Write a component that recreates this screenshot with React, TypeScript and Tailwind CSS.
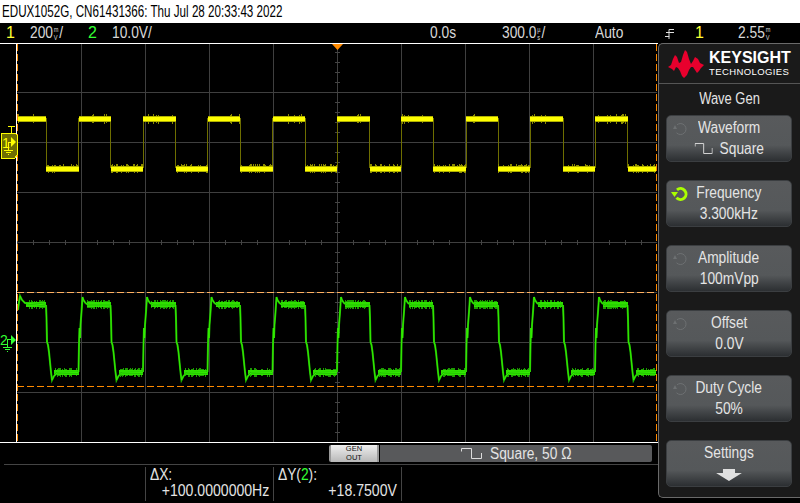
import React from "react";

const PLOT_L = 17;
const PLOT_R = 656;

// edges read off the trace, first one is a falling edge
const FALL = [46, 110.5, 175.5, 240, 305, 369.5, 433, 498, 563, 627.5];
const RISE = [78.5, 143, 207.5, 272.5, 337, 401, 466, 530, 595];
const VLINES = [81, 145, 209, 273, 337, 401, 465, 529, 593];
const HLINES = [92, 142, 192, 242, 292, 342, 392];

// the scope's font is narrower than anything installed
const NARROW = "inline-block origin-left scale-x-[0.86] whitespace-nowrap";
const NARROW_MID = "inline-block origin-center scale-x-[0.86] whitespace-nowrap";

let seed = 7;
const rnd = () => {
  seed = (seed * 16807) % 2147483647;
  return seed / 2147483647;
};

function spans() {
  const out: { a: number; b: number; high: boolean }[] = [];
  let x = PLOT_L + 1;
  FALL.forEach((f, i) => {
    out.push({ a: x, b: f, high: true });
    const r = RISE[i] ?? PLOT_R;
    out.push({ a: f, b: r, high: false });
    x = r;
  });
  return out;
}

function noise(a: number, b: number, y1: number, y2: number, chance: number) {
  let d = "";
  for (let x = Math.ceil(a); x < b; x += 1) {
    if (rnd() > chance) continue;
    const up = Math.floor(rnd() * 2);
    const dn = Math.floor(rnd() * 2);
    d += `M${x + 0.5} ${y1 - up}V${y2 + dn}`;
  }
  return d;
}

const yellowNoise = spans()
  .map((s) =>
    s.high ? noise(s.a, s.b, 115, 123, 0.1) : noise(s.a, s.b, 165, 172, 0.5)
  )
  .join("");

const yellowEdges = [...FALL, ...RISE]
  .map((x) => `M${Math.floor(x) + 0.5} 118V168`)
  .join("");

// one rising and one falling stretch of channel 2
function greenRise(x: number, end: number) {
  return `M${x} 372L${x + 0.5} 345L${x + 1} 328L${x + 1.5} 338L${x + 2} 325L${x + 3} 312L${x + 4} 297L${x + 5} 300L${x + 7} 303L${x + 10} 305L${end} 305`;
}
function greenFall(x: number, end: number) {
  return `M${x} 305L${x + 0.5} 318L${x + 1} 342L${x + 2} 345L${x + 3} 352L${x + 4} 362L${x + 5} 372L${x + 6} 380L${x + 8} 376L${x + 11} 373L${end} 372.5`;
}
const greenPath = [
  `M18 310L19 302L20 296L22 300L25 303L${FALL[0]} 305`,
  ...FALL.map((f, i) => greenFall(f, RISE[i] ?? PLOT_R)),
  ...RISE.map((r, i) => greenRise(r, FALL[i + 1])),
].join("");

const greenNoise = spans()
  .map((s) =>
    s.high
      ? noise(s.a + 8, s.b - 1, 301, 308, 0.7)
      : noise(s.a + 9, s.b - 1, 369, 376, 0.7)
  )
  .join("");

function Ticks() {
  const v: number[] = [];
  for (let y = 52; y < 442; y += 10) v.push(y);
  const h: number[] = [];
  for (let x = 17; x < 656; x += 16) h.push(x);
  return (
    <g stroke="#444" strokeWidth="1">
      {v.map((y) => (
        <path key={y} d={`M335 ${y + 0.5}H340`} />
      ))}
      {h.map((x) => (
        <path key={x} d={`M${x + 0.5} 240V245`} />
      ))}
    </g>
  );
}

function Plot() {
  return (
    <svg
      width="658"
      height="398"
      viewBox="0 44 658 398"
      className="block"
      shapeRendering="crispEdges"
    >
      <g stroke="#3f3f3f" strokeWidth="1">
        {VLINES.map((x) => (
          <path key={x} d={`M${x + 0.5} 44V442`} />
        ))}
        {HLINES.map((y) => (
          <path key={y} d={`M17 ${y + 0.5}H657`} />
        ))}
      </g>
      <Ticks />

      <path d={yellowEdges} stroke="#6e6e00" strokeWidth="1" />
      <path d={yellowNoise} stroke="#8a8a00" strokeWidth="1" />
      {spans().map((s) => (
        <g key={s.a}>
          <rect
            x={s.a}
            y={s.high ? 116 : 166}
            width={s.b - s.a}
            height="6"
            fill="#b0b000"
          />
          <rect
            x={s.a}
            y={s.high ? 117 : 167}
            width={s.b - s.a}
            height="4"
            fill="#ffff00"
          />
        </g>
      ))}

      <path d={greenNoise} stroke="#1c9c00" strokeWidth="1" />
      {spans().map((s) => (
        <rect
          key={s.a}
          x={s.a + 8}
          y={s.high ? 302 : 370}
          width={s.b - s.a - 8}
          height="5"
          fill="#2ee000"
        />
      ))}
      <g shapeRendering="auto">
        <path d={greenPath} stroke="#1fb400" strokeWidth="2" fill="none" />
        <path d={greenPath} stroke="#33ee00" strokeWidth="1" fill="none" />
      </g>

      <path d="M17 292.5H656" stroke="#ffb060" strokeDasharray="7 3" />
      <path d="M17 386.5H656" stroke="#ff8a00" strokeDasharray="7 3" />
      <path d="M16.5 44V442" stroke="#ffffff" />
      <path d="M17.5 44V442" stroke="#ff8a00" strokeDasharray="7 3" />
      <path d="M656.5 44V442" stroke="#ff8a00" strokeDasharray="7 3" />

      <path d="M332 44H343L337.5 50Z" fill="#ff8a00" shapeRendering="auto" />

      <path d="M1 133H15L17 135V155L15 158H1Z" fill="#6e6e00" stroke="#ffff00" />
      <path d="M8 126.5H15M11.5 127V133" stroke="#ffff00" />
      <text x="2" y="148" fontSize="14" fill="#ffff00" shapeRendering="auto">
        1
      </text>
      <path d="M8 150V142H12" stroke="#ffff00" fill="none" />
      <path d="M11 137L16 142L11 147Z" fill="#ffff00" shapeRendering="auto" />
      <path d="M4 150.5H13M6 152.5H11M8 154.5H9" stroke="#ffff00" />

      <text x="0" y="345" fontSize="14" fill="#33ff33" shapeRendering="auto">
        2
      </text>
      <path d="M7.5 348V339.5H11" stroke="#33ff33" fill="none" />
      <path d="M11 335L16 340L11 345Z" fill="#33ff33" shapeRendering="auto" />
      <path d="M3 347.5H12M5 349.5H10M7 351.5H8" stroke="#33ff33" />
    </svg>
  );
}

function Unit({ top, bottom }: { top: string; bottom: string }) {
  return (
    <span className="mx-px inline-flex flex-col align-middle text-[6.5px] leading-[7.5px]">
      <span>{top}</span>
      <span>{bottom}</span>
    </span>
  );
}

function StatusBar() {
  return (
    <div className="flex h-[20px] items-center bg-black text-[16px] leading-none text-[#d8d8d8]">
      <span className="w-[30px] pl-[6px] text-[#ffff33]">1</span>
      <span className="w-[58px]">
        <span className={NARROW}>
          200
          <Unit top="m" bottom="V" />/
        </span>
      </span>
      <span className="w-[24px] text-[#33ff33]">2</span>
      <span className="w-[318px]">
        <span className={NARROW}>10.0V/</span>
      </span>
      <span className="w-[72px]">
        <span className={NARROW}>0.0s</span>
      </span>
      <span className="w-[93px]">
        <span className={NARROW}>
          300.0
          <Unit top="µ" bottom="s" />/
        </span>
      </span>
      <span className="w-[70px]">
        <span className={NARROW}>Auto</span>
      </span>
      <span className="w-[30px]">
        <svg width="10" height="12" viewBox="0 0 10 12">
          <path d="M0 9.5H4V2.5H9M1 5.5H9M4 9V12" stroke="#e0e0e0" fill="none" />
        </svg>
      </span>
      <span className="w-[43px] text-[#ffff33]">1</span>
      <span className={NARROW}>
        2.55
        <Unit top="m" bottom="V" />
      </span>
    </div>
  );
}

function SquareGlyph() {
  return (
    <svg width="21" height="11" viewBox="0 0 21 11" className="inline-block">
      <path d="M.5 3.5V.5H10.5V10.5H20.5V5" stroke="#dcdcdc" fill="none" />
    </svg>
  );
}

function Knob({ active }: { active?: boolean }) {
  const color = active ? "#aaff00" : "#6d7072";
  return (
    <svg
      width="18"
      height="16"
      viewBox="0 0 18 16"
      className="absolute left-[4px] top-[5px]"
    >
      <path
        d="M6 3.8A5.5 5.5 0 1 1 5.5 11.8"
        fill="none"
        stroke={color}
        strokeWidth={active ? 3 : 1}
      />
      <path d={active ? "M0 6H7L3.5 11Z" : "M2 8H6L4 4Z"} fill={color} />
    </svg>
  );
}

function SoftKey({
  top,
  bottom,
  active,
  knob = true,
}: {
  top: string;
  bottom: React.ReactNode;
  active?: boolean;
  knob?: boolean;
}) {
  return (
    <div className="relative flex h-[47px] w-[126px] flex-col items-center rounded-[5px] border border-[#3b3e41] bg-gradient-to-b from-[#585a5c] via-[#55585a] via-65% to-[#2c2f32] pt-[1px] text-[16px] leading-[21px] text-[#e4e4e4]">
      {knob && <Knob active={active} />}
      <span className={NARROW_MID}>{top}</span>
      <span className={NARROW_MID}>{bottom}</span>
    </div>
  );
}

function Logo() {
  return (
    <div className="flex h-[34px] items-start gap-[5px] border-b border-[#555] pl-[9px]">
      <svg width="36" height="28" viewBox="0 0 36 28">
        <path
          d="M0 17L3 15L5 9L7 5L9 7L11 13L13 12L15 5L17 0L19 2L21 9L23 14L25 11L27 7L30 9L32 13L36 15L33 18L31 21L29 23L27 20L25 17L23 17L21 20L19 25L16 28L14 26L12 21L10 18L8 17L6 21L4 19Z"
          fill="#e8002d"
        />
      </svg>
      <div className="flex flex-col text-white">
        <span className="text-[16px] font-bold leading-[16px]">KEYSIGHT</span>
        <span className="text-[9.5px] leading-[12px] tracking-[0.4px]">
          TECHNOLOGIES
        </span>
      </div>
    </div>
  );
}

function SidePanel() {
  return (
    <div className="flex h-[455px] w-[142px] flex-col rounded-l-[5px] border-y border-l border-[#6a6a6a] bg-[#1a1a1a] pt-[6px]">
      <Logo />
      <div className="flex h-[31px] items-center justify-center pb-[2px] text-[16px] text-[#e4e4e4]">
        <span className="inline-block origin-center scale-x-[0.81]">Wave Gen</span>
      </div>
      <div className="flex flex-col gap-[18px] pl-[7px]">
        <SoftKey
          top="Waveform"
          bottom={
            <span className="flex items-center gap-[8px]">
              <SquareGlyph /> Square
            </span>
          }
        />
        <SoftKey top="Frequency" bottom="3.300kHz" active />
        <SoftKey top="Amplitude" bottom="100mVpp" />
        <SoftKey top="Offset" bottom="0.0V" />
        <SoftKey top="Duty Cycle" bottom="50%" />
        <SoftKey
          top="Settings"
          knob={false}
          bottom={
            <svg width="30" height="12" viewBox="0 0 30 12" className="mt-[6px] block">
              <path d="M8 0H22V4H30L15 12L0 4H8Z" fill="#e0e0e0" />
            </svg>
          }
        />
      </div>
    </div>
  );
}

function GenOut() {
  return (
    <div className="flex h-[21px] items-start pl-[329px] pr-[6px] pt-[2px]">
      <div className="flex h-[17px] w-[50px] flex-col items-center justify-center rounded-l-[2px] border-x-2 border-[#999] bg-gradient-to-b from-[#eeeeee] to-[#b8b8b8] text-[7.5px] leading-[8.5px] text-[#111]">
        <span>GEN</span>
        <span>OUT</span>
      </div>
      <div className="ml-px flex h-[17px] flex-1 items-center justify-center gap-[8px] rounded-r-[2px] bg-[#58595b] text-[16px] leading-none text-[#e4e4e4]">
        <SquareGlyph />
        <span className="w-[81px]">
          <span className={NARROW}>Square, 50 Ω</span>
        </span>
      </div>
    </div>
  );
}

function Measure({ label, value }: { label: React.ReactNode; value: string }) {
  return (
    <div className="flex h-[34px] w-[128px] flex-col border-r border-[#444] px-[4px] text-[16px] text-[#e4e4e4]">
      <span className="leading-[15px]">
        <span className={NARROW}>{label}</span>
      </span>
      <span className="flex justify-end leading-[18px]">
        <span className="inline-block origin-right scale-x-[0.88] whitespace-nowrap">
          {value}
        </span>
      </span>
    </div>
  );
}

export default function App() {
  return (
    <div className="flex h-[503px] w-[800px] flex-col overflow-hidden bg-black font-['Liberation_Sans',sans-serif]">
      <div className="flex h-[23px] items-center bg-white pl-[2px] text-[16px] leading-none text-black">
        <span className="inline-block origin-left scale-x-[0.727] whitespace-nowrap">
          EDUX1052G, CN61431366: Thu Jul 28 20:33:43 2022
        </span>
      </div>
      <StatusBar />
      <div className="flex flex-1">
        <div className="flex w-[658px] flex-col">
          <div className="border-y border-white">
            <Plot />
          </div>
          <GenOut />
          <div className="ml-[4px] flex border-t border-[#444] pl-[141px] pt-[2px]">
            <div className="border-l border-[#444]">
              <div className="flex">
                <Measure label="ΔX:" value="+100.0000000Hz" />
                <Measure
                  label={
                    <>
                      ΔY(<span className="text-[#33ff33]">2</span>):
                    </>
                  }
                  value="+18.7500V"
                />
              </div>
            </div>
          </div>
        </div>
        <SidePanel />
      </div>
    </div>
  );
}
